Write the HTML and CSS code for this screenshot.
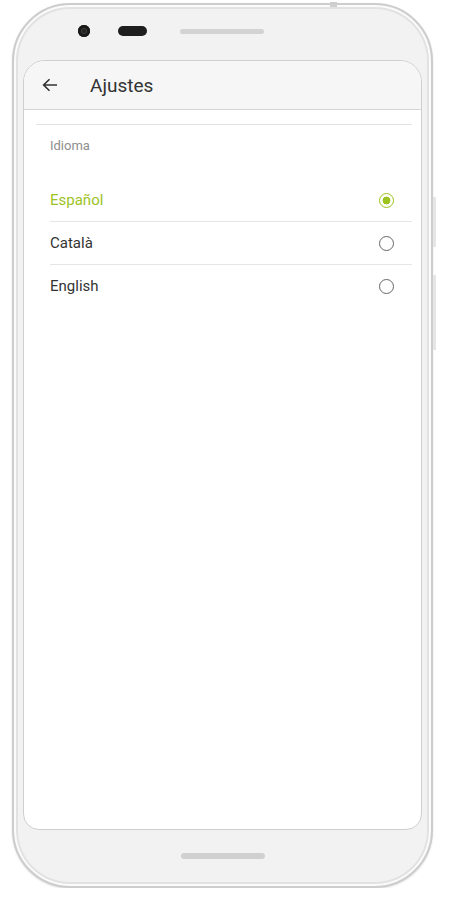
FILE: index.html
```html
<!DOCTYPE html>
<html lang="es">
<head>
    <meta charset="UTF-8">
    <meta name="viewport" content="width=device-width, initial-scale=1.0">
    <title>Ajustes</title>
    <link rel="stylesheet" href="styles.css">
</head>
<body>
    <div class="phone">
        <span class="side-btn top-btn"></span>
        <span class="side-btn right-btn-1"></span>
        <span class="side-btn right-btn-2"></span>

        <div class="bezel-top">
            <span class="camera"></span>
            <span class="sensor"></span>
            <span class="speaker"></span>
        </div>

        <div class="screen">
            <header class="app-bar">
                <svg class="back" width="16" height="14" viewBox="0 0 16 14">
                    <path d="M15 7H1.8M7.5 1.2L1.6 7l5.9 5.8" fill="none" stroke="#333" stroke-width="1.6"/>
                </svg>
                <h1>Ajustes</h1>
            </header>

            <div class="content">
                <div class="divider"></div>
                <div class="section">
                    <p class="section-title">Idioma</p>
                    <div class="option selected">
                        <span>Español</span>
                        <span class="radio"></span>
                    </div>
                    <div class="option">
                        <span>Català</span>
                        <span class="radio"></span>
                    </div>
                    <div class="option last">
                        <span>English</span>
                        <span class="radio"></span>
                    </div>
                </div>
            </div>
        </div>

        <div class="bezel-bottom">
            <span class="home"></span>
        </div>
    </div>
</body>
</html>
```

FILE: styles.css
```css
body {
    font-family: 'Roboto', 'Liberation Sans', sans-serif;
    margin: 0;
    padding: 0;
    background: #fff;
}
.phone {
    position: relative;
    box-sizing: border-box;
    width: 421px;
    height: 885px;
    margin: 3px 0 0 12px;
    border-radius: 58px;
    background: #f2f2f2;
    border: 2px solid #cdcdcd;
    box-shadow: inset 0 0 0 2px #fbfbfb, inset 0 0 0 4px #e2e2e2, 0 1px 2px rgba(0, 0, 0, 0.12);
    display: flex;
    flex-direction: column;
    align-items: center;
}
.side-btn {
    position: absolute;
    background: #e6e6e6;
}
.top-btn {
    top: -3px;
    left: 316px;
    width: 7px;
    height: 5px;
    background: #cfcfcf;
}
.right-btn-1 {
    right: -5px;
    top: 192px;
    width: 3px;
    height: 50px;
}
.right-btn-2 {
    right: -5px;
    top: 270px;
    width: 3px;
    height: 75px;
}
.bezel-top {
    align-self: stretch;
    height: 55px;
    box-sizing: border-box;
    padding: 20px 0 0 64px;
    display: flex;
    align-items: flex-start;
}
.camera {
    width: 12px;
    height: 12px;
    border-radius: 50%;
    background: #222;
    box-shadow: inset 0 0 0 3px #1a1a1a, inset 0 0 0 4px #3b3f38;
}
.sensor {
    width: 29px;
    height: 10px;
    margin: 1px 0 0 28px;
    border-radius: 5px;
    background: #1e1e1e;
}
.speaker {
    width: 84px;
    height: 5px;
    margin: 4px 0 0 33px;
    border-radius: 3px;
    background: #d3d3d3;
}
.screen {
    box-sizing: border-box;
    width: 399px;
    height: 770px;
    background: #fff;
    border: 1px solid #cfcfcf;
    border-radius: 22px 22px 16px 16px;
    overflow: hidden;
}
.app-bar {
    height: 48px;
    display: flex;
    align-items: center;
    padding-left: 18px;
    background: #f6f6f6;
    border-bottom: 1px solid #d6d6d6;
}
.back {
    display: block;
}
.app-bar h1 {
    margin: 0 0 0 32px;
    font-size: 19px;
    font-weight: 400;
    color: #333;
}
.content {
    padding: 14px 9px 0 12px;
}
.divider {
    height: 1px;
    background: #e2e2e2;
}
.section {
    padding-left: 14px;
}
.section-title {
    margin: 0;
    padding: 13px 0 25px;
    font-size: 13px;
    line-height: 16px;
    color: #8e8e8e;
}
.option {
    height: 42px;
    display: flex;
    align-items: center;
    justify-content: space-between;
    padding-right: 18px;
    font-size: 15px;
    color: #333;
    border-bottom: 1px solid #e6e6e6;
}
.option.last {
    border-bottom: none;
}
.option.selected {
    color: #9cc31f;
}
.radio {
    box-sizing: border-box;
    width: 15px;
    height: 15px;
    border-radius: 50%;
    border: 1.5px solid #666;
}
.option.selected .radio {
    border-color: #9cc31f;
    background: radial-gradient(circle, #9cc31f 0 3.6px, transparent 4.2px);
}
.bezel-bottom {
    flex: 1;
    align-self: stretch;
    display: flex;
    justify-content: center;
    padding-top: 23px;
}
.home {
    width: 84px;
    height: 6px;
    border-radius: 3px;
    background: #d0d0d0;
}
```
